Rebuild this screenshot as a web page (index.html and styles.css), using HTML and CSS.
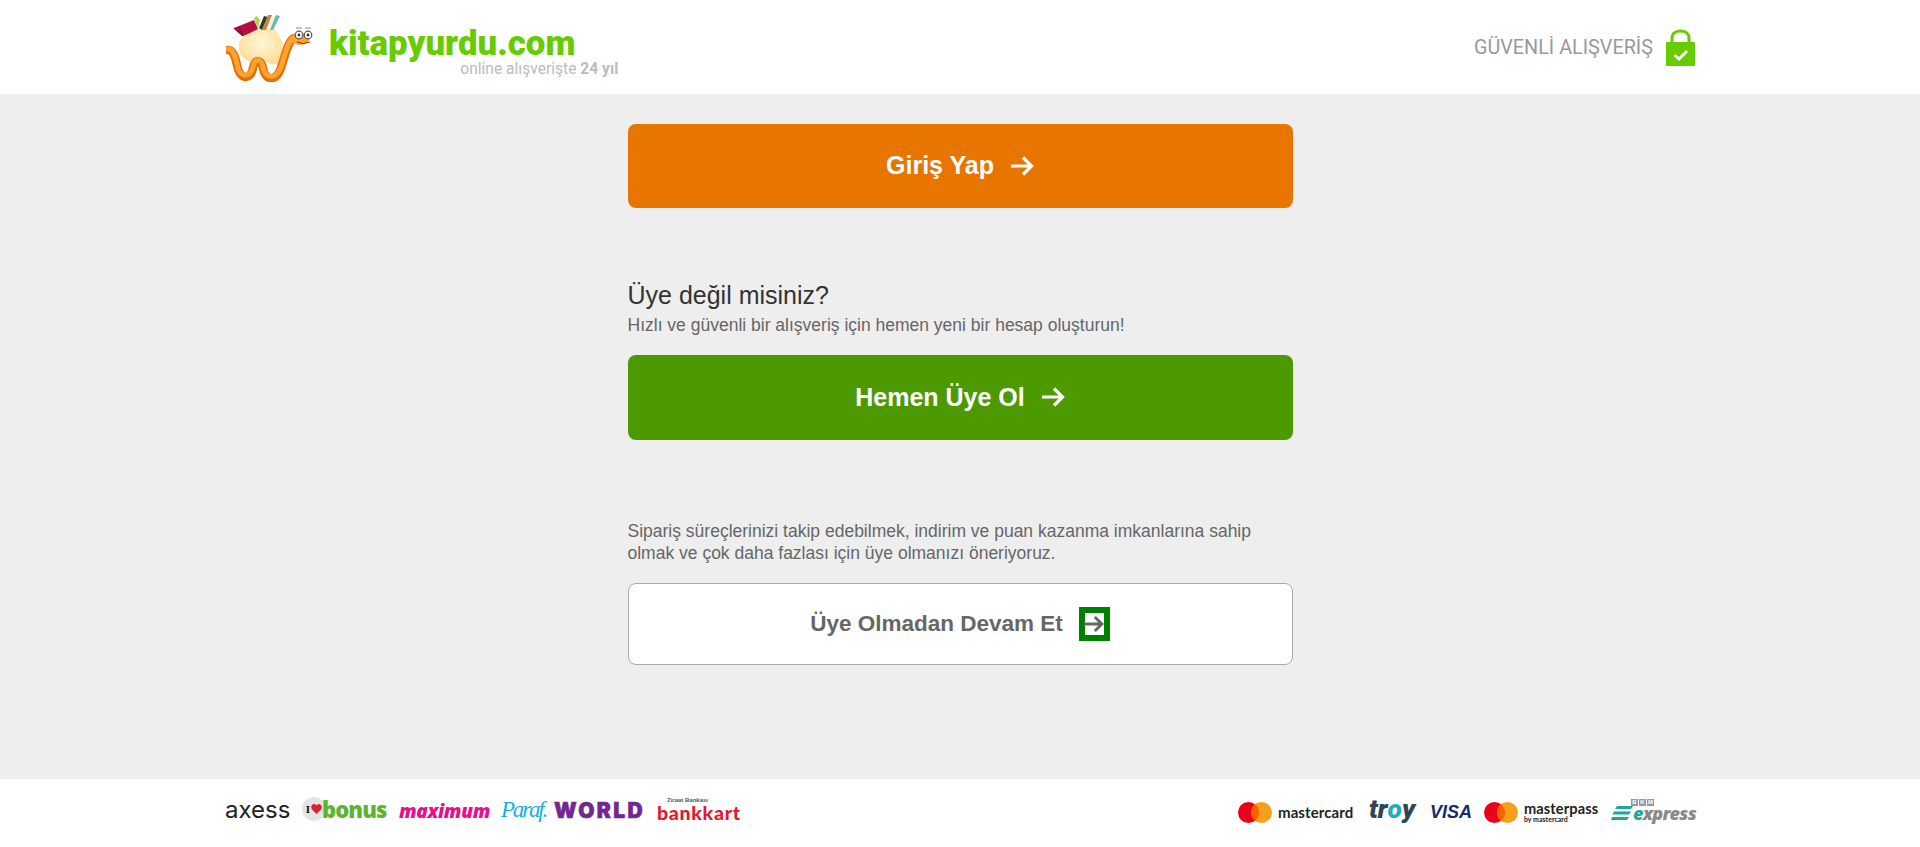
FILE: index.html
```html
<!DOCTYPE html>
<html lang="tr">
<head>
<meta charset="utf-8">
<title>kitapyurdu.com</title>
<link rel="stylesheet" href="styles.css">
</head>
<body>
<header class="top">
  <div class="wrap top-row">
    <a class="brand" href="#">
      <svg class="worm" viewBox="0 0 90 70" aria-hidden="true">
        <defs>
          <radialGradient id="sack" cx="50%" cy="40%" r="60%"><stop offset="0" stop-color="#fff6d8"/><stop offset="1" stop-color="#fcdc94"/></radialGradient>
        </defs>
        <path d="M13 30 L19 22 L28 17 L48 16 L53 24 L57 31 L55 40 L58 46 L53 53 L44 52 L35 47 L25 51 L15 44 L13 38 Z" fill="url(#sack)"/>
        <path d="M2 38 C7 38 9 44 11 53 C13 68 25 69 27 56 C29 47 35 47 37 56 C39 69 50 70 55 56 C59 45 61 30 68 26" fill="none" stroke="#e06f08" stroke-width="8.500" stroke-linecap="round"/>
        <path d="M2 37 C7 37 9 43 11 52 C13 66 24 67 27 55 C29 46 35 46 37 55 C39 67 50 68 55 55 C59 44 61 29 68 25" fill="none" stroke="#ffa12f" stroke-width="5" stroke-linecap="round"/>
        <path d="M8 16 L28 8 L32 17 L24 21 L17 24 Z" fill="#b30f40"/>
        <path d="M8 16 L17 24 M17 24 L13 15" fill="none" stroke="#7f0a2b" stroke-width="1.200"/>
        <path d="M28 6 L31 4 L34 8 L32 17 Z" fill="#a5d95a"/>
        <path d="M33 16 L38 4 L42 5 L36 18 Z" fill="#3a3a2a"/>
        <path d="M36 18 L42 3 L46 3 L40 18 Z" fill="#c8853d"/>
        <path d="M41 18 L47 3 L50 4 L44 18 Z" fill="#fdf3d3"/>
        <path d="M44 18 L50 3 L54 4 L47 18 Z" fill="#63b9b3"/>
        <ellipse cx="74" cy="27" rx="9.500" ry="6" fill="#ffa12f"/>
        <circle cx="73" cy="23" r="3.800" fill="#fff" stroke="#555" stroke-width="1.200"/>
        <circle cx="82" cy="23" r="3.800" fill="#fff" stroke="#555" stroke-width="1.200"/>
        <circle cx="73" cy="23" r="1.400" fill="#333"/>
        <circle cx="82" cy="23" r="1.400" fill="#333"/>
        <path d="M70 16 H76 M79 16 H85" stroke="#888" stroke-width="1"/>
        <path d="M71 30 Q77 33 84 30" fill="none" stroke="#7a3b00" stroke-width="1"/>
      </svg>
      <span class="brand-text">
        <span class="brand-name">kitapyurdu.com</span>
        <span class="brand-tag">online alışverişte <b>24 yıl</b></span>
      </span>
    </a>
    <div class="secure">
      <span>GÜVENLİ ALIŞVERİŞ</span>
      <svg class="lock" viewBox="0 0 29 37" aria-hidden="true">
        <path d="M6 15 V9 C6 4 10 2 14.500 2 C19 2 23 4 23 9 V15" fill="none" stroke="#66cc00" stroke-width="3"/>
        <rect x="0" y="13" width="29" height="24" rx="1" fill="#66cc00"/>
        <path d="M8.500 26 L13 30 L21 22" fill="none" stroke="#fff" stroke-width="3"/>
      </svg>
    </div>
  </div>
</header>

<main class="main">
  <div class="column">
    <a class="btn btn-orange" href="#">Giriş Yap
      <svg class="arrow" viewBox="0 0 24 24" aria-hidden="true"><path d="M1 12 H21 M13 3.500 L21.500 12 L13 20.500" fill="none" stroke="currentColor" stroke-width="3.200"/></svg>
    </a>
    <h2 class="title">Üye değil misiniz?</h2>
    <p class="sub">Hızlı ve güvenli bir alışveriş için hemen yeni bir hesap oluşturun!</p>
    <a class="btn btn-green" href="#">Hemen Üye Ol
      <svg class="arrow" viewBox="0 0 24 24" aria-hidden="true"><path d="M1 12 H21 M13 3.500 L21.500 12 L13 20.500" fill="none" stroke="currentColor" stroke-width="3.200"/></svg>
    </a>
    <p class="info">Sipariş süreçlerinizi takip edebilmek, indirim ve puan kazanma imkanlarına sahip olmak ve çok daha fazlası için üye olmanızı öneriyoruz.</p>
    <a class="btn btn-white" href="#">Üye Olmadan Devam Et
      <span class="focus-box"><svg class="arrow-in" viewBox="0 0 24 24" aria-hidden="true"><path d="M0 12 H21 M13 3.500 L21.500 12 L13 20.500" fill="none" stroke="currentColor" stroke-width="3.500"/></svg></span>
    </a>
  </div>
</main>

<footer class="bottom">
  <div class="wrap bottom-row">
    <div class="logos">
      <span class="l-axess">axess</span>
      <span class="l-bonus">
        <span class="ball"><b>I</b><svg class="heart" viewBox="0 0 12 11" aria-hidden="true"><path d="M6 11 L1 6 C-1 3 1 0 3.500 0 C5 0 6 1.500 6 2 C6 1.500 7 0 8.500 0 C11 0 13 3 11 6 Z" fill="#e5202e"/></svg></span>
        <span class="bonus-word">bonus</span>
      </span>
      <span class="l-maximum">maximum</span>
      <span class="l-paraf">Paraf.</span>
      <span class="l-world">WORLD</span>
      <span class="l-bank">
        <span class="bank-top">Ziraat Bankası</span>
        <span class="bank-word">bankkart</span>
      </span>
    </div>
    <div class="logos">
      <span class="l-mc">
        <svg class="mc-mark" viewBox="0 0 34 21" aria-hidden="true"><circle cx="10.500" cy="10.500" r="10.500" fill="#eb001b"/><circle cx="23.500" cy="10.500" r="10.500" fill="#f79e1b"/><path d="M17 2.300 A10.500 10.500 0 0 1 17 18.700 A10.500 10.500 0 0 1 17 2.300" fill="#ff5f00"/></svg>
        <span class="mc-word">mastercard</span>
      </span>
      <span class="l-troy">tr<i>o</i>y</span>
      <span class="l-visa">VISA</span>
      <span class="l-mp">
        <svg class="mc-mark" viewBox="0 0 34 21" aria-hidden="true"><circle cx="10.500" cy="10.500" r="10.500" fill="#eb001b"/><circle cx="23.500" cy="10.500" r="10.500" fill="#f79e1b"/><path d="M17 2.300 A10.500 10.500 0 0 1 17 18.700 A10.500 10.500 0 0 1 17 2.300" fill="#ff5f00"/></svg>
        <span class="mp-text"><span class="mp-word">masterpass</span><span class="mp-by">by mastercard</span></span>
      </span>
      <span class="l-express">
        <span class="bkm"><b>B</b><b>K</b><b>M</b></span>
        <span class="exp-row">
          <svg class="speed" viewBox="0 0 22 14" aria-hidden="true"><path d="M6 0 H22 L20 3 H4 Z M3 5.500 H20 L18 8.500 H1.500 Z M1 11 H18 L16 14 H0 Z" fill="#1aa99a"/></svg>
          <span class="exp-e">e</span><span class="exp-word">xpress</span>
        </span>
      </span>
    </div>
  </div>
</footer>
</body>
</html>
```
FILE: styles.css
```css
* { box-sizing: border-box; }
html, body { margin: 0; height: 100%; }
body {
  height: 847px;
  overflow: hidden;
  display: flex;
  flex-direction: column;
  background: #eee;
  font-family: "Liberation Sans", Arial, sans-serif;
}
a { text-decoration: none; color: inherit; }
.wrap { width: 1470px; margin: 0 auto; }

/* header */
.top { height: 94px; background: #fff; flex: none; }
.top-row { height: 94px; display: flex; justify-content: space-between; align-items: flex-start; }
.brand { display: flex; align-items: flex-start; padding: 12px 0 0 1px; }
.worm { width: 90px; height: 70px; display: block; }
.brand-text { display: flex; flex-direction: column; margin-left: 13px; font-family: Roboto, sans-serif; }
.brand-name { font-size: 34.8px; line-height: 40px; margin-top: 11px; font-weight: 900; color: #66cc00; }
.brand-tag { font-size: 15.6px; line-height: 16px; color: #bbb; margin-top: -2px; align-self: flex-end; margin-right: -43px; }
.brand-tag b { font-weight: 700; }
.secure { display: flex; align-items: center; gap: 13px; margin-top: 29px; font-family: Roboto, sans-serif; font-size: 19.8px; color: #999; }
.lock { width: 29px; height: 37px; display: block; }

/* main */
.main { flex: 1; display: flex; justify-content: center; }
.column { width: 665px; padding-top: 30px; }
.btn {
  display: flex; align-items: center; justify-content: center;
  border-radius: 8px; font-weight: 700; font-size: 25px; color: #fff;
  padding-bottom: 1px;
}
.btn-orange { height: 84px; background: #e87500; }
.btn-green { height: 85px; background: #4c9a00; }
.btn-white { height: 82px; background: #fff; border: 1px solid #aaa; color: #666; font-size: 22.5px; padding-bottom: 0; }
.arrow { width: 24px; height: 24px; margin-left: 16px; display: block; }
.title { margin: 70px 0 0; font-size: 25px; line-height: 35px; font-weight: 400; color: #333; }
.sub { margin: 0 0 17px; font-size: 17.5px; line-height: 25px; color: #666; }
.info { margin: 80px 0 19px; font-size: 17.5px; line-height: 22px; color: #666; }
.focus-box { width: 31px; height: 34px; margin-left: 16px; border: 6px solid #008000; display: flex; align-items: center; justify-content: center; flex: none; }
.arrow-in { width: 20px; height: 24px; display: block; color: #666; flex: none; }

/* footer */
.bottom { height: 68px; background: #fff; flex: none; }
.bottom-row { height: 68px; display: flex; justify-content: space-between; align-items: flex-start; }
.logos { display: flex; align-items: flex-start; padding-top: 18px; }
.logos > span { display: flex; white-space: nowrap; }

.l-axess { width: 65px; margin-right: 12px; margin-top: 1px; font-family: Inter, sans-serif; font-weight: 400; font-size: 24px; line-height: 24px; letter-spacing: 0; color: #222; }
.l-bonus { width: 84px; margin-right: 13px; align-items: center; }
.ball { width: 24px; height: 24px; border-radius: 50%; background: #e4e4e4; display: flex; align-items: center; justify-content: center; gap: 1px; font-size: 11px; font-family: "Liberation Serif", serif; color: #111; flex: none; }
.heart { width: 11px; height: 10px; display: block; }
.bonus-word { font-family: "Open Sans", sans-serif; font-weight: 800; font-size: 22px; line-height: 24px; letter-spacing: -0.9px; color: #5bb432; margin-left: -4px; }
.l-maximum { width: 90px; margin-right: 12px; margin-top: 2px; font-family: "Open Sans", sans-serif; font-weight: 800; font-style: italic; font-size: 19px; line-height: 24px; letter-spacing: -0.3px; color: #ec0c8e; }
.l-paraf { width: 43px; margin-right: 10px; font-family: "Liberation Serif", serif; font-style: italic; font-size: 23px; line-height: 26px; letter-spacing: -2.2px; color: #18aee0; }
.l-world { width: 90px; margin-right: 13px; margin-top: 2px; font-family: Inter, sans-serif; font-weight: 900; font-size: 21px; line-height: 24px; letter-spacing: 2.4px; color: #73288f; -webkit-text-stroke: 0.6px #73288f; }
.l-bank { width: 84px; flex-direction: column; }
.bank-top { font-size: 6px; line-height: 7px; font-weight: 700; color: #555; padding-left: 10px; }
.bank-word { font-family: Lato, sans-serif; font-weight: 900; font-size: 19.5px; line-height: 15px; letter-spacing: 0.7px; margin-top: 1px; color: #e4172f; }

.mc-mark { width: 34px; height: 21px; display: block; flex: none; }
.l-mc { width: 119px; margin-right: 12px; margin-top: 5px; align-items: center; }
.mc-word { margin-left: 6px; font-family: Lato, sans-serif; font-size: 15px; font-weight: 700; line-height: 21px; letter-spacing: 0.1px; color: #222; }
.l-troy { width: 47px; margin-right: 14px; margin-top: -1px; font-family: Roboto, sans-serif; font-weight: 900; font-style: italic; font-size: 26.5px; line-height: 26px; color: #2f4552; }
.l-troy i { color: #1eaebd; }
.l-visa { width: 41px; margin-right: 13px; margin-top: 3px; font-family: "Liberation Sans", sans-serif; font-weight: 700; font-style: italic; font-size: 18px; line-height: 24px; color: #1a2a6c; }
.l-mp { width: 113px; margin-right: 14px; margin-top: 5px; align-items: center; }
.mp-text { display: flex; flex-direction: column; margin-left: 6px; font-family: Lato, sans-serif; color: #222; }
.mp-word { font-size: 14.6px; font-weight: 700; line-height: 13px; letter-spacing: 0.1px; }
.mp-by { font-size: 7px; line-height: 8px; font-weight: 700; }
.l-express { width: 84px; flex-direction: column; margin-top: 2px; }
.bkm { display: flex; gap: 1px; margin-left: 20px; }
.bkm b { width: 7px; height: 7px; background: #999; color: #fff; font-size: 6px; line-height: 7px; text-align: center; }
.exp-row { display: flex; align-items: center; font-family: "Open Sans", sans-serif; font-style: italic; font-weight: 800; font-size: 18px; line-height: 14px; letter-spacing: -0.7px; color: #8a8a8a; }
.speed { width: 22px; height: 14px; display: block; flex: none; }
.exp-e { color: #1aa99a; }
```
